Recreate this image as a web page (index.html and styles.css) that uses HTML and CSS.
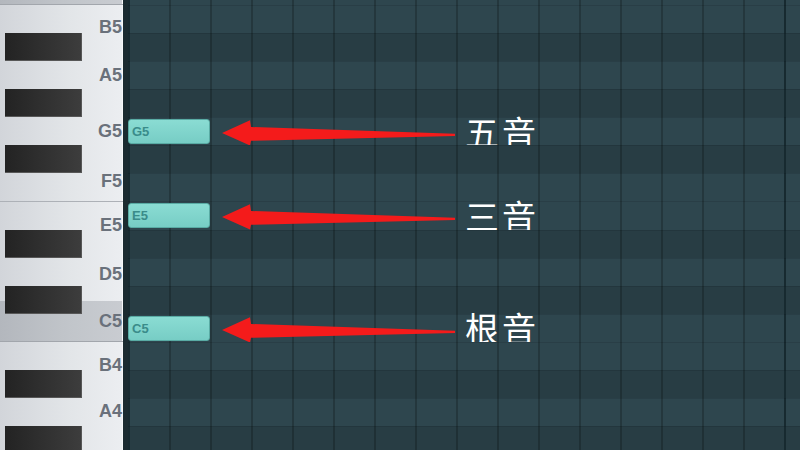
FILE: index.html
```html
<!DOCTYPE html>
<html lang="zh-CN">

<head>
    <meta charset="UTF-8">
    <meta name="viewport" content="width=device-width, initial-scale=1.0">
    <title>钢琴卷帘 - 大三和弦</title>
    <link rel="stylesheet" href="styles.css">
</head>

<body>
    <div class="roll">
        <div class="keyboard">
            <div class="white-keys">
                <div class="key c key-c6"></div>
                <div class="key key-b5"><span>B5</span></div>
                <div class="key key-a5"><span>A5</span></div>
                <div class="key key-g5"><span>G5</span></div>
                <div class="key edge key-f5"><span>F5</span></div>
                <div class="key key-e5"><span>E5</span></div>
                <div class="key key-d5"><span>D5</span></div>
                <div class="key c key-c5"><span>C5</span></div>
                <div class="key key-b4"><span>B4</span></div>
                <div class="key key-a4"><span>A4</span></div>
                <div class="key key-g4"></div>
            </div>

            <div class="black-keys">
                <div class="slot top"></div>
                <div class="slot"></div>
                <div class="slot"><div class="black"></div></div>
                <div class="slot"></div>
                <div class="slot"><div class="black"></div></div>
                <div class="slot"></div>
                <div class="slot"><div class="black"></div></div>
                <div class="slot"></div>
                <div class="slot"></div>
                <div class="slot"><div class="black"></div></div>
                <div class="slot"></div>
                <div class="slot"><div class="black"></div></div>
                <div class="slot"></div>
                <div class="slot"></div>
                <div class="slot"><div class="black"></div></div>
                <div class="slot"></div>
                <div class="slot"><div class="black"></div></div>
            </div>
        </div>

        <div class="grid">
            <div class="row top"></div>
            <div class="row"></div>
            <div class="row dark"></div>
            <div class="row"></div>
            <div class="row dark"></div>
            <div class="row">
                <div class="note">G5</div>
                <svg class="arrow" width="234" height="26" viewBox="0 0 234 26">
                    <polygon points="0,13 28,0.3 29,7 233,13.7 233,15.9 29,20.8 28,25.5" />
                </svg>
                <span class="tag">五音</span>
            </div>
            <div class="row dark"></div>
            <div class="row"></div>
            <div class="row">
                <div class="note">E5</div>
                <svg class="arrow" width="234" height="26" viewBox="0 0 234 26">
                    <polygon points="0,13 28,0.3 29,7 233,13.7 233,15.9 29,20.8 28,25.5" />
                </svg>
                <span class="tag">三音</span>
            </div>
            <div class="row dark"></div>
            <div class="row"></div>
            <div class="row dark"></div>
            <div class="row">
                <div class="note">C5</div>
                <svg class="arrow" width="234" height="26" viewBox="0 0 234 26">
                    <polygon points="0,13 28,0.3 29,7 233,13.7 233,15.9 29,20.8 28,25.5" />
                </svg>
                <span class="tag">根音</span>
            </div>
            <div class="row"></div>
            <div class="row dark"></div>
            <div class="row"></div>
            <div class="row dark"></div>
        </div>
    </div>
</body>

</html>
```

FILE: styles.css
```css
body {
    margin: 0;
    background-color: #283d44;
    font-family: "Liberation Sans", Arial, sans-serif;
    overflow: hidden;
}

.roll {
    display: flex;
    width: 800px;
    height: 450px;
    overflow: hidden;
}

/* keyboard */

.keyboard {
    position: relative;
    flex: none;
    width: 123px;
    border-right: 5px solid #1b2b30;
}

.white-keys {
    display: flex;
    flex-direction: column;
    height: 100%;
}

.key {
    flex: none;
    box-sizing: border-box;
    display: flex;
    align-items: center;
    justify-content: flex-end;
    padding-right: 1px;
    background: linear-gradient(to right, #d2d5da, #e2e5e8 55%, #eceef1);
    box-shadow: inset -1px 0 0 #f6f7f8;
    color: #6a717b;
    font-size: 18px;
    font-weight: bold;
}

.key.c {
    background: linear-gradient(to right, #b3b7bd, #c1c5ca 55%, #c9ccd1);
    border-bottom: 1px solid #a2a6ac;
}

.key.edge {
    border-bottom: 1px solid #adb1b7;
}

.key-c6 { height: 4.5px; }
.key-b5 { height: 45px; }
.key-a5 { height: 51px; }
.key-g5 { height: 61px; }
.key-f5 { height: 40px; }
.key-e5 { height: 47px; }
.key-d5 { height: 52.5px; }
.key-c5 { height: 41.2px; }
.key-b4 { height: 46px; }
.key-a4 { height: 46px; }
.key-g4 { flex: 1; }

.black-keys {
    position: absolute;
    top: 0;
    left: 0;
    right: 0;
    bottom: 0;
    display: flex;
    flex-direction: column;
}

.slot {
    flex: none;
    height: 28.14px;
}

.slot.top {
    height: 4.5px;
}

.black {
    box-sizing: border-box;
    width: 77px;
    height: 100%;
    margin-left: 5px;
    background: linear-gradient(to right, #232323, #303030 50%, #3d3d3d);
    box-shadow: inset -1px -1px 0 #575757;
}

/* note grid */

.grid {
    flex: 1;
    display: flex;
    flex-direction: column;
    min-width: 0;
}

.row {
    flex: none;
    box-sizing: border-box;
    height: 28.14px;
    display: flex;
    align-items: center;
    border-top: 1px solid rgba(0, 0, 0, 0.1);
    background-color: #2e464e;
    background-image:
        linear-gradient(to right, transparent 654px, #172a30 654px, #172a30 656px, transparent 656px),
        linear-gradient(to right, transparent 39px, rgba(0, 0, 0, 0.22) 39px, rgba(0, 0, 0, 0.22) 41px, transparent 41px);
    background-size: 656px 100%, 41px 100%;
    background-position: 2px 0, 2px 0;
}

.row.dark {
    background-color: #283d44;
}

.row.top {
    height: 4.5px;
    border-top: 0;
}

.note {
    flex: none;
    box-sizing: border-box;
    width: 82px;
    height: 25px;
    display: flex;
    align-items: center;
    padding-left: 3px;
    border: 1px solid #59aba4;
    border-radius: 3px;
    background: linear-gradient(#8adcd3, #77cdc5);
    color: #3a8c8a;
    font-size: 13px;
    font-weight: bold;
}

.arrow {
    flex: none;
    margin-left: 12px;
    margin-top: 3px;
    fill: #f41b1b;
}

.tag {
    margin-left: 9px;
    color: #ffffff;
    font-family: "Noto Sans CJK SC", "Noto Sans", sans-serif;
    font-size: 34px;
    line-height: 1;
    letter-spacing: 3px;
    white-space: nowrap;
}
```
